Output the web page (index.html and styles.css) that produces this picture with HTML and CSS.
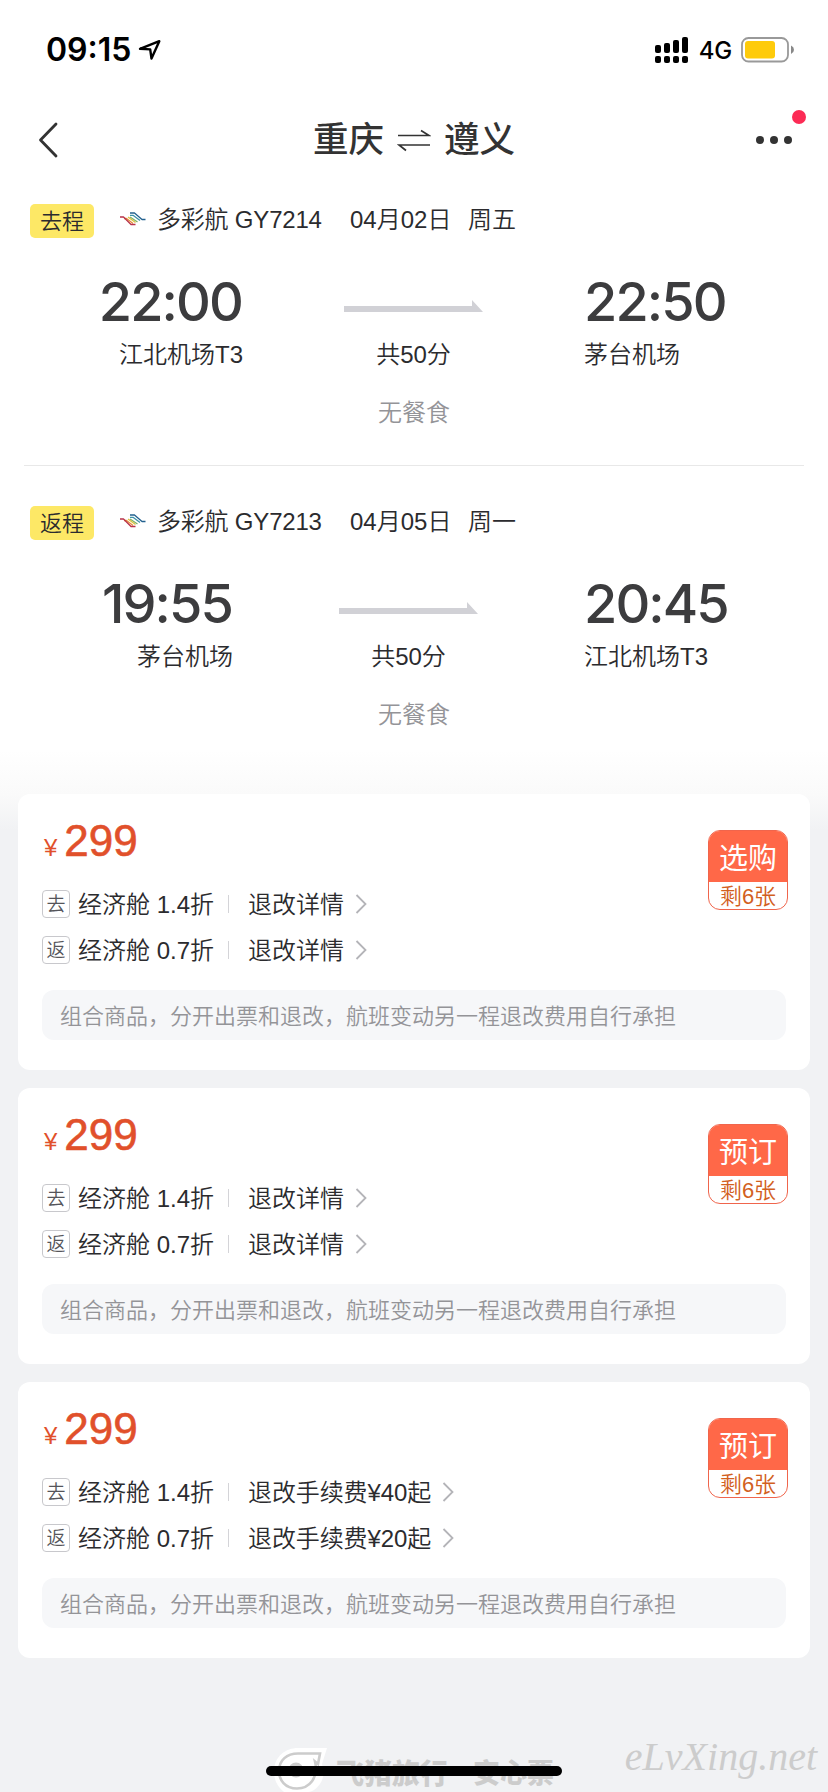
FILE: index.html
```html
<!DOCTYPE html>
<html lang="zh-CN">
<head>
<meta charset="utf-8">
<title>重庆 ⇌ 遵义</title>
<link rel="stylesheet" href="styles.css">
</head>
<body>
<svg width="0" height="0" class="defs">
  <defs>
    <symbol id="airline" viewBox="0 0 26 14">
      <g fill="none" stroke-width="1.300" stroke-linejoin="round">
        <path stroke="#7db36a" d="M10 5L17.500 10"/>
        <path stroke="#dcc23e" d="M8 5L15.500 10.500"/>
        <path stroke="#e68a3a" d="M4 6.500H6.500L13 11.500"/>
        <path stroke="#b8324a" d="M0 5H3.500L11 12.500H15.500"/>
        <path stroke="#3d93a8" d="M10 3.300H13L20 8.500"/>
        <path stroke="#23618f" d="M10 1H14.500L22 7.500H25.500"/>
      </g>
    </symbol>
    <symbol id="arrow" viewBox="0 0 139 12">
      <path fill="#d1d1d6" d="M0 6H128V0L139 12H0Z"/>
    </symbol>
    <symbol id="chevron" viewBox="0 0 12 20">
      <path fill="none" stroke="#b4b4b8" stroke-width="1.800" d="M1.500 1L10.500 10L1.500 19"/>
    </symbol>
  </defs>
</svg>
<div class="screen">
  <header class="status">
    <span class="clock">09:15</span>
    <svg class="locate" width="24" height="22" viewBox="0 0 24 22"><path fill="none" stroke="#000" stroke-width="2.400" stroke-linejoin="round" d="M2 9.800L21.300 2.200L13.500 19.600L12.200 10.400Z"/></svg>
    <span class="spacer"></span>
    <svg class="signal" width="34" height="27" viewBox="0 0 34 27">
      <rect x="0" y="8" width="6" height="8" rx="2"/><rect x="9" y="6" width="6" height="10" rx="2"/><rect x="18" y="3" width="6" height="13" rx="2"/><rect x="27" y="0" width="6" height="16" rx="2"/>
      <rect x="0" y="19" width="6" height="7" rx="2"/><rect x="9" y="19" width="6" height="7" rx="2"/><rect x="18" y="19" width="6" height="7" rx="2"/><rect x="27" y="19" width="6" height="7" rx="2"/>
    </svg>
    <span class="network">4G</span>
    <svg class="battery" width="54" height="26" viewBox="0 0 54 26"><rect x="1" y="1" width="46" height="23.500" rx="6.500" fill="#fff" stroke="#999" stroke-width="1.800"/><rect x="4" y="4" width="30" height="17.500" rx="3" fill="#fecb0b"/><path fill="#888" d="M50 8.500Q53 10 53 12.700T50 17Z"/></svg>
  </header>

  <nav class="nav">
    <svg class="back" width="20" height="36" viewBox="0 0 20 36"><path fill="none" stroke="#333" stroke-width="2.800" stroke-linecap="round" stroke-linejoin="round" d="M18 2L2.500 18L18 34"/></svg>
    <h1 class="title"><span>重庆</span><svg width="34" height="24" viewBox="0 0 34 24"><path fill="none" stroke="#333" stroke-width="1.700" d="M1 7.500H32L24 2.500M33 17H2L9 22.500"/></svg><span>遵义</span></h1>
    <div class="more"><i></i><i></i><i></i><b class="badge"></b></div>
  </nav>

  <section class="leg">
    <div class="info"><span class="tag">去程</span><svg class="airline" width="26" height="14"><use href="#airline"/></svg><span class="flight">多彩航 GY7214</span><span class="date">04月02日</span><span class="day">周五</span></div>
    <div class="route">
      <div class="from wide"><strong>22:00</strong><span>江北机场T3</span></div>
      <div class="mid"><svg width="139" height="12"><use href="#arrow"/></svg><span>共50分</span></div>
      <div class="to"><strong>22:50</strong><span>茅台机场</span></div>
    </div>
    <p class="meal">无餐食</p>
  </section>
  <hr class="rule">
  <section class="leg">
    <div class="info"><span class="tag">返程</span><svg class="airline" width="26" height="14"><use href="#airline"/></svg><span class="flight">多彩航 GY7213</span><span class="date">04月05日</span><span class="day">周一</span></div>
    <div class="route">
      <div class="from"><strong>19:55</strong><span>茅台机场</span></div>
      <div class="mid"><svg width="139" height="12"><use href="#arrow"/></svg><span>共50分</span></div>
      <div class="to"><strong>20:45</strong><span>江北机场T3</span></div>
    </div>
    <p class="meal">无餐食</p>
  </section>

  <main class="offers">
    <article class="card">
      <div class="top">
        <div class="details">
          <div class="price"><small>¥</small>299</div>
          <div class="cabin"><span class="box">去</span><span class="class">经济舱 1.4折</span><i class="sep"></i><span>退改详情</span><svg width="12" height="20"><use href="#chevron"/></svg></div>
          <div class="cabin"><span class="box">返</span><span class="class">经济舱 0.7折</span><i class="sep"></i><span>退改详情</span><svg width="12" height="20"><use href="#chevron"/></svg></div>
        </div>
        <div class="buy"><span class="action">选购</span><span class="left">剩6张</span></div>
      </div>
      <p class="note">组合商品，分开出票和退改，航班变动另一程退改费用自行承担</p>
    </article>
    <article class="card">
      <div class="top">
        <div class="details">
          <div class="price"><small>¥</small>299</div>
          <div class="cabin"><span class="box">去</span><span class="class">经济舱 1.4折</span><i class="sep"></i><span>退改详情</span><svg width="12" height="20"><use href="#chevron"/></svg></div>
          <div class="cabin"><span class="box">返</span><span class="class">经济舱 0.7折</span><i class="sep"></i><span>退改详情</span><svg width="12" height="20"><use href="#chevron"/></svg></div>
        </div>
        <div class="buy"><span class="action">预订</span><span class="left">剩6张</span></div>
      </div>
      <p class="note">组合商品，分开出票和退改，航班变动另一程退改费用自行承担</p>
    </article>
    <article class="card">
      <div class="top">
        <div class="details">
          <div class="price"><small>¥</small>299</div>
          <div class="cabin"><span class="box">去</span><span class="class">经济舱 1.4折</span><i class="sep"></i><span class="fee">退改手续费¥40起</span><svg width="12" height="20"><use href="#chevron"/></svg></div>
          <div class="cabin"><span class="box">返</span><span class="class">经济舱 0.7折</span><i class="sep"></i><span class="fee">退改手续费¥20起</span><svg width="12" height="20"><use href="#chevron"/></svg></div>
        </div>
        <div class="buy"><span class="action">预订</span><span class="left">剩6张</span></div>
      </div>
      <p class="note">组合商品，分开出票和退改，航班变动另一程退改费用自行承担</p>
    </article>
  </main>

  <footer class="foot">
    <svg class="logo" width="54" height="44" viewBox="0 0 54 44"><path fill="#fff" d="M24 0H53L48 16Q52 27 46 36Q40 44 34 44H10Q0 36 0 24C0 8 12 0 24 0Z"/><path fill="none" stroke="#ccc" stroke-width="2.600" d="M24 5.500H46L44 16L41 13.500C45 30 35 40.500 23 40.500C11 40.500 5 32 5 23C5 12 13 5.500 24 5.500Z"/><circle cx="22" cy="22" r="7.500" fill="#ccc"/></svg>
    <span class="brand">飞猪旅行</span><span class="brand slogan">安心票</span>
    <span class="site">eLvXing.net</span>
    <span class="home"></span>
  </footer>
</div>
</body>
</html>
```
FILE: styles.css
```css
* { box-sizing: border-box; }
body {
  margin: 0;
  font-family: "Liberation Sans", "Noto Sans CJK SC", sans-serif;
  font-size: 24px;
  font-weight: 350;
  line-height: 36px;
  color: #2b2b2e;
}
.defs { display: block; position: absolute; }
.screen {
  width: 828px;
  height: 1792px;
  display: flex;
  flex-direction: column;
  overflow: hidden;
  background: linear-gradient(#fff 750px, #fafafa 795px, #f1f2f4 830px);
}
.spacer { flex: 1; }

.status {
  height: 100px;
  padding: 0 33px 0 46px;
  display: flex;
  align-items: center;
  color: #000;
  font-family: Inter, sans-serif;
}
.clock { font-size: 32px; font-weight: 600; }
.locate { margin-left: 7px; }
.signal { margin-right: 10px; }
.network { font-weight: 500; font-size: 24px; letter-spacing: -0.2px; margin: 2px 9px 0 0; }

.nav {
  height: 80px;
  padding: 0 36px 0 38px;
  display: flex;
  align-items: center;
  justify-content: space-between;
  color: #333;
}
.title {
  margin: 0 0 0 14px;
  display: flex;
  align-items: center;
  gap: 13px;
  font-size: 35.5px;
  font-weight: 500;
}
.more { position: relative; display: flex; gap: 6px; }
.more i { width: 8px; height: 8px; border-radius: 50%; background: #333; }
.badge {
  position: absolute;
  right: -14px;
  top: -26px;
  width: 14px;
  height: 14px;
  border-radius: 50%;
  background: #fc2b55;
}

.leg { height: 284px; padding: 20px 30px 0; }
.info { display: flex; align-items: center; height: 38px; }
.tag {
  width: 64px;
  height: 34px;
  margin-top: 4px;
  border-radius: 5px;
  background: #fde866;
  font-size: 22px;
  line-height: 35px;
  text-align: center;
}
.airline { margin: 0 11px 0 26px; }
.flight { width: 193px; letter-spacing: -0.2px; padding-top: 1px; }
.date { width: 118px; padding-top: 1px; }
.day { padding-top: 1px; }
.route { display: flex; height: 136px; padding-top: 34px; }
.route > div { display: flex; flex-direction: column; }
.route strong {
  font-family: Inter, sans-serif;
  font-size: 54px;
  font-weight: 500;
  line-height: 60px;
  letter-spacing: -1.9px;
  color: #3c3c3e;
}
.route span { margin-top: 5px; }
.from { width: 203px; align-items: flex-end; }
.from strong { margin-right: 1px; }
.wide { width: 213px; }
.mid { flex: 1; align-items: center; padding-top: 28px; }
.mid svg { margin-bottom: 20px; }
.to { width: 214px; }
.meal { margin: 21px 0 0; text-align: center; color: #949498; }
.rule { width: 780px; height: 1px; margin: 1px auto 16px; border: 0; background: #e8e8e8; }

.offers { margin: 28px 18px 0; display: grid; gap: 18px; }
.card { height: 276px; padding: 24px; border-radius: 12px; background: #fff; }
.top { display: flex; justify-content: space-between; height: 172px; }
.price {
  height: 63px;
  padding-left: 2px;
  font-size: 44px;
  line-height: 45px;
  color: #e1502b;
  -webkit-text-stroke: 0.6px #e1502b;
}
.price small { font-size: 24px; margin-right: 7px; -webkit-text-stroke: 0; }
.cabin { display: flex; align-items: center; height: 46px; }
.cabin span:not(.box) { padding-top: 2px; }
.box {
  width: 28px;
  height: 28px;
  margin-right: 8px;
  border: 1px solid #c8c8cc;
  border-radius: 4px;
  font-size: 19px;
  line-height: 27px;
  text-align: center;
  color: #55555a;
}
.class { width: 150px; }
.sep { width: 1px; height: 18px; margin-right: 19px; background: #d4d4d8; }
.fee { letter-spacing: -0.1px; }
.cabin svg { margin-left: 11px; }
.buy {
  width: 80px;
  height: 80px;
  margin: 12px -2px 0 0;
  display: flex;
  flex-direction: column;
  overflow: hidden;
  border: 1px solid #f0654c;
  border-radius: 12px;
  text-align: center;
}
.action { height: 51px; background: #ff6848; color: #fff; font-size: 29px; font-weight: 400; line-height: 56px; }
.left { font-size: 22px; line-height: 30px; color: #d2601e; }
.note {
  height: 50px;
  margin: 0;
  padding-left: 18px;
  border-radius: 12px;
  background: #f6f7f9;
  font-size: 22px;
  line-height: 54px;
  color: #949498;
}

.foot {
  position: relative;
  flex: 1;
  display: flex;
  align-items: flex-end;
  padding: 0 11px 0 274px;
  color: #ccc;
}
.logo { margin-right: 8px; }
.brand { font-family: "Noto Sans CJK SC", sans-serif; font-size: 28px; font-weight: 900; line-height: 40px; }
.slogan { margin-left: 25px; font-size: 27px; }
.site {
  margin-left: auto;
  font-family: "Liberation Serif", serif;
  font-size: 40px;
  font-style: italic;
  line-height: 48px;
  padding-bottom: 11px;
}
.home {
  position: absolute;
  left: 266px;
  bottom: 16px;
  width: 296px;
  height: 10px;
  border-radius: 5px;
  background: #000;
}
```
